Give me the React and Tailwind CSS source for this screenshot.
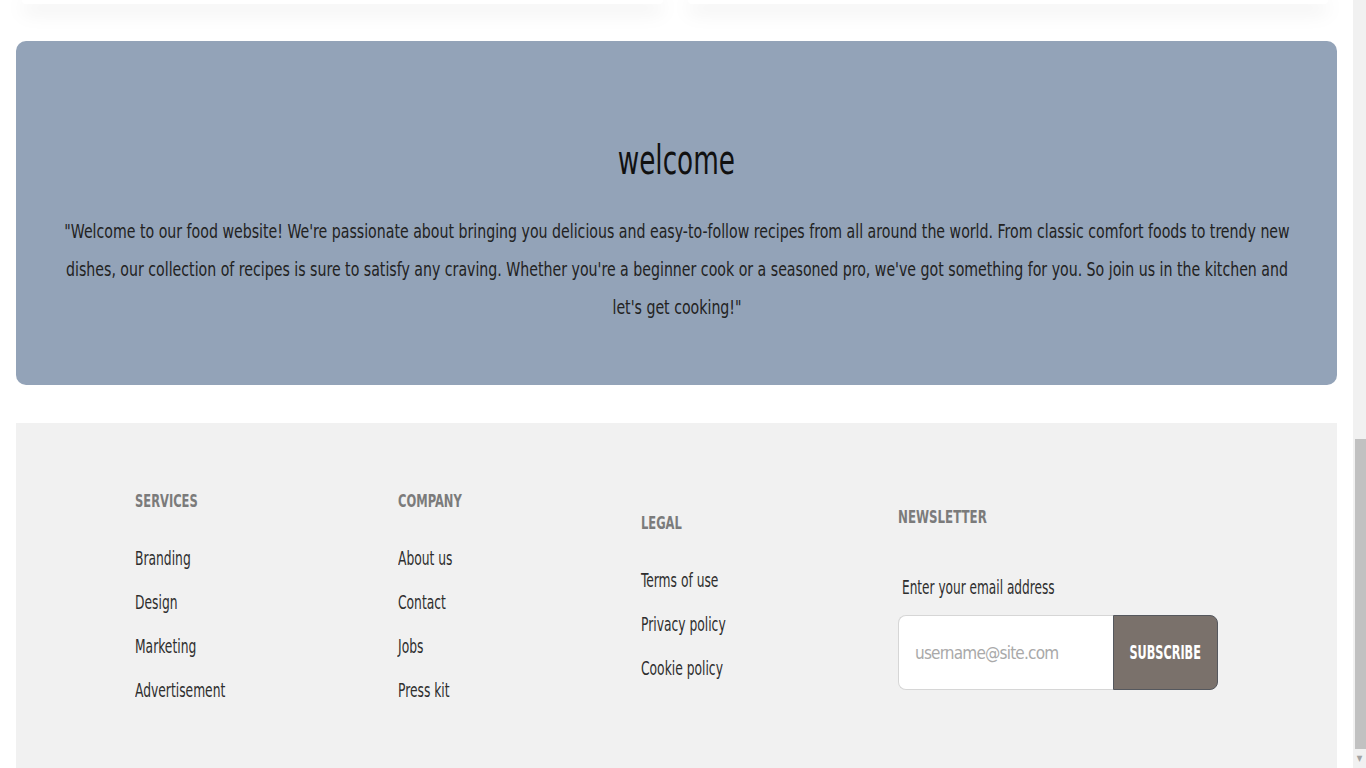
import React from "react";

const font = { fontFamily: '"DejaVu Sans Condensed", "Liberation Sans", sans-serif' };

function Col({ title, items }) {
  return (
    <div>
      <h4 className="text-[18px] font-bold text-[#7b7b7b] leading-[24px]">
        <span className="inline-block origin-left scale-x-[0.71]">{title}</span>
      </h4>
      <ul className="mt-[33px] flex flex-col gap-[20px]">
        {items.map((t) => (
          <li key={t} className="text-[19px] leading-[24px] text-[#2e2e2e]">
            <span className="inline-block origin-left scale-x-[0.72]">{t}</span>
          </li>
        ))}
      </ul>
    </div>
  );
}

export default function App() {
  return (
    <div className="flex h-[768px] w-[1366px] overflow-hidden bg-white" style={font}>
      <div className="flex-1 flex flex-col">
        <div className="flex h-[4px] pl-[22px] pr-[21px] gap-[25px]">
          <div className="flex-1 bg-white rounded-b-[10px] shadow-[0_6px_20px_rgba(0,0,0,0.18)]"></div>
          <div className="flex-1 bg-white rounded-b-[10px] shadow-[0_6px_20px_rgba(0,0,0,0.18)]"></div>
        </div>
        <section className="mt-[37px] ml-[16px] w-[1321px] h-[344px] rounded-[10px] bg-[#93a3b8] flex flex-col items-center pt-[95px]">
          <h2 className="text-[40px] leading-[48px] text-[#111] font-normal">
            <span className="inline-block scale-x-[0.73]">welcome</span>
          </h2>
          <p className="mt-[28px] w-[1500px] shrink-0 scale-x-[0.828] text-center text-[19px] leading-[38px] text-[#222]">
            "Welcome to our food website! We're passionate about bringing you delicious and easy-to-follow recipes from all around the world. From classic comfort foods to trendy new
            <br />
            dishes, our collection of recipes is sure to satisfy any craving. Whether you're a beginner cook or a seasoned pro, we've got something for you. So join us in the kitchen and
            <br />
            let's get cooking!"
          </p>
        </section>
        <footer className="mt-[38px] ml-[16px] w-[1321px] flex-1 bg-[#f1f1f1] pt-[66px] pl-[119px] flex">
          <div className="w-[263px]">
            <Col title="SERVICES" items={["Branding", "Design", "Marketing", "Advertisement"]} />
          </div>
          <div className="w-[243px]">
            <Col title="COMPANY" items={["About us", "Contact", "Jobs", "Press kit"]} />
          </div>
          <div className="w-[257px] pt-[22px]">
            <Col title="LEGAL" items={["Terms of use", "Privacy policy", "Cookie policy"]} />
          </div>
          <div className="pt-[16px]">
            <h4 className="text-[18px] font-bold text-[#7b7b7b] leading-[24px]">
              <span className="inline-block origin-left scale-x-[0.73]">NEWSLETTER</span>
            </h4>
            <p className="mt-[46px] ml-[4px] text-[19px] leading-[24px] text-[#2e2e2e]">
              <span className="inline-block origin-left scale-x-[0.71]">Enter your email address</span>
            </p>
            <div className="mt-[16px] flex h-[75px] w-[320px]">
              <input
                placeholder="username@site.com"
                className="w-[215px] h-full bg-white border border-[#d6d6d6] border-r-0 rounded-l-[8px] pl-[16px] text-[17px] tracking-[-0.8px] text-[#333] placeholder:text-[#a9a9a9] outline-none"
                style={font}
              />
              <button className="w-[105px] h-full bg-[#7a716b] border border-[#55585e] rounded-r-[8px] text-white font-bold text-[19px] flex items-center justify-center" style={font}>
                <span className="inline-block scale-x-[0.66]">SUBSCRIBE</span>
              </button>
            </div>
          </div>
        </footer>
      </div>
      <div className="w-[17px] flex flex-col items-end">
        <div className="w-[13px] h-full bg-[#f1f1f1] flex flex-col">
          <div className="h-[439px]"></div>
          <div className="h-[310px] w-[11px] ml-[2px] bg-[#c1c1c1]"></div>
          <div className="flex-1 flex items-center justify-center text-[8px] text-[#a3a3a3]">▼</div>
        </div>
      </div>
    </div>
  );
}
